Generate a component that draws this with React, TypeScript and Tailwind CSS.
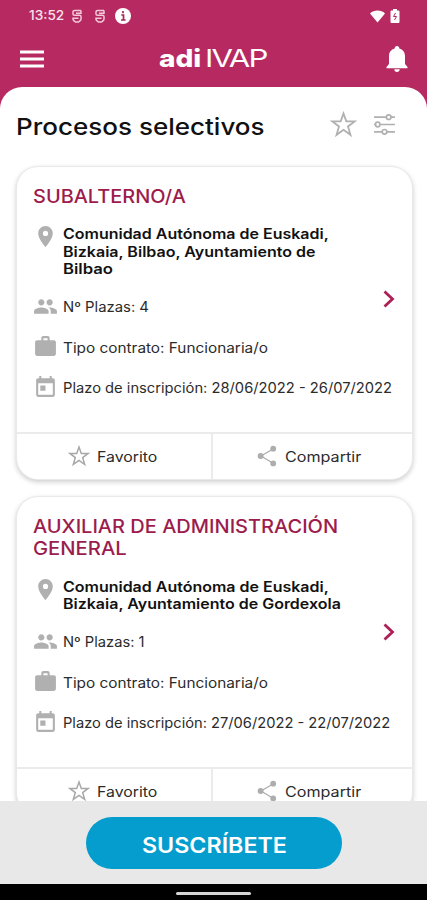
import { useLayoutEffect, useRef, useState } from "react";
import { MdPeople, MdPlace, MdToday, MdWork } from "react-icons/md";

/** Single line of text stretched horizontally to a given width. */
function Fit({ w, children }: { w: number; children: string }) {
  const ref = useRef<HTMLSpanElement>(null);
  const [scale, setScale] = useState(1);
  useLayoutEffect(() => {
    if (ref.current) setScale(w / ref.current.offsetWidth);
  }, [w]);
  return (
    <span className="block whitespace-nowrap" style={{ width: w }}>
      <span ref={ref} className="inline-block origin-left align-top" style={{ transform: `scaleX(${scale})` }}>
        {children}
      </span>
    </span>
  );
}

function Star({ className }: { className: string }) {
  return (
    <svg viewBox="0 0 24 24" className={className} fill="none" stroke="currentColor" strokeWidth="1.6">
      <path d="M12 2.2 14.5 9.2H22L16 13.7 18.2 21.2 12 16.7 5.8 21.2 8 13.7 2 9.2H9.5Z" />
    </svg>
  );
}

function Share() {
  return (
    <svg viewBox="0 0 20 22" className="h-[22px] w-5 text-[#adadad]" fill="currentColor">
      <path d="M16.5 3.7 4 11l12.5 7.5" fill="none" stroke="currentColor" strokeWidth="1.3" />
      <circle cx="16.2" cy="3.7" r="2.9" />
      <circle cx="3.6" cy="11" r="2.9" />
      <circle cx="16.2" cy="18.4" r="2.9" />
    </svg>
  );
}

function Sliders() {
  return (
    <svg viewBox="0 0 22 22" className="h-[23px] w-[23px] text-[#b0b0b0]" fill="none" stroke="currentColor" strokeWidth="1.6">
      <path d="M1 4h12M17 4h4M1 11h2M7 11h14M1 18h8M13 18h8" />
      <circle cx="15" cy="4" r="2.2" />
      <circle cx="4.5" cy="11" r="2.2" />
      <circle cx="11" cy="18" r="2.2" />
    </svg>
  );
}

function StatusLoop() {
  return (
    <svg viewBox="0 0 12 14" className="h-3.5 w-3" fill="none" stroke="#f3c9da" strokeWidth="1.5">
      <path d="M10 1.5H3.5Q2 1.500 2 3v2q0 1.300 1.500 1.300h5Q10 6.300 10 7.600V10q0 1-.8 1.600L7.500 13h-3L2.800 11.600Q2 11 2 10V9.300h5.500M10 1.500v2.800H5" />
    </svg>
  );
}

type Line = [text: string, width: number];
type Job = { title: Line[]; place: Line[]; posts: Line; type: Line; term: Line };

const jobs: Job[] = [
  {
    title: [["SUBALTERNO/A", 153]],
    place: [
      ["Comunidad Autónoma de Euskadi,", 266],
      ["Bizkaia, Bilbao, Ayuntamiento de", 253],
      ["Bilbao", 50],
    ],
    posts: ["Nº Plazas: 4", 86],
    type: ["Tipo contrato: Funcionaria/o", 205],
    term: ["Plazo de inscripción: 28/06/2022 - 26/07/2022", 329],
  },
  {
    title: [
      ["AUXILIAR DE ADMINISTRACIÓN", 305],
      ["GENERAL", 94],
    ],
    place: [
      ["Comunidad Autónoma de Euskadi,", 266],
      ["Bizkaia, Ayuntamiento de Gordexola", 277.5],
    ],
    posts: ["Nº Plazas: 1", 82],
    type: ["Tipo contrato: Funcionaria/o", 205],
    term: ["Plazo de inscripción: 27/06/2022 - 22/07/2022", 327],
  },
];

function Card({ job }: { job: Job }) {
  const rows = [
    { Icon: MdPeople, line: job.posts },
    { Icon: MdWork, line: job.type },
    { Icon: MdToday, line: job.term },
  ];
  return (
    <article className="w-[395px] shrink-0 overflow-hidden rounded-[21px] bg-white shadow-[0_0_0_1px_#e9e9e9,0_2px_5px_1px_rgba(0,0,0,0.2)]">
      <div className="relative pt-[18px] pl-4">
        <h2 className="text-[18.5px] leading-[22.5px] font-medium text-[#9c1c4d]">
          {job.title.map(([t, w]) => (
            <Fit key={t} w={w}>{t}</Fit>
          ))}
        </h2>
        <div className="mt-[18px] flex">
          <MdPlace className="-mt-px h-[25px] w-[25px] shrink-0 text-[#b0b0b0]" />
          <div className="ml-[5px] text-[14px] leading-[17.5px] font-semibold text-[#111]">
            {job.place.map(([t, w]) => (
              <Fit key={t} w={w}>{t}</Fit>
            ))}
          </div>
        </div>
        <div className="mt-[20.5px] flex flex-col gap-[23px] pb-[35px]">
          {rows.map(({ Icon, line: [t, w] }) => (
            <div key={t} className="flex h-[17.5px] items-center text-[14px] leading-[17.5px] text-[#2b2b2b]">
              <Icon className="-mt-px h-[25px] w-[25px] shrink-0 text-[#b0b0b0]" />
              <div className="ml-[5px]">
                <Fit w={w}>{t}</Fit>
              </div>
            </div>
          ))}
        </div>
        <svg viewBox="0 0 12 18" className="absolute top-1/2 right-[17px] -mt-[9px] h-[18px] w-3" fill="none" stroke="#ad1f55" strokeWidth="2.8">
          <path d="M1.5 1.5 9.5 9l-8 7.5" />
        </svg>
      </div>
      <div className="flex h-[47px] border-t-2 border-[#ebebeb] text-[14px] text-[#2b2b2b]">
        <button className="flex w-[195.5px] items-center border-r-2 border-[#ebebeb] pl-[51px]">
          <Star className="h-[22px] w-[22px] text-[#a8a8a8]" />
          <span className="ml-1"><Fit w={60}>Favorito</Fit></span>
        </button>
        <button className="flex flex-1 items-center pl-11">
          <Share />
          <span className="ml-[3.5px]"><Fit w={76}>Compartir</Fit></span>
        </button>
      </div>
    </article>
  );
}

export default function App() {
  return (
    <div className="flex h-[900px] w-[427px] flex-col overflow-hidden bg-[#b62a61] font-['Inter','Liberation_Sans',sans-serif]">
      <div className="flex h-8 shrink-0 items-center pl-[29px] text-[12.5px] font-medium text-[#f9e4ec]">
        <Fit w={35}>13:52</Fit>
        <span className="ml-[7px]"><StatusLoop /></span>
        <span className="ml-[11px]"><StatusLoop /></span>
        <svg viewBox="0 0 16 16" className="ml-[9px] h-4 w-4">
          <circle cx="8" cy="8" r="8" fill="#fff" />
          <path d="M6.3 7H8.5v5M6 12h4.6M8 3v2.2" fill="none" stroke="#a6265a" strokeWidth="1.7" />
        </svg>
        <svg viewBox="0 0 16 13" className="ml-auto h-[13px] w-[15px]">
          <path d="M0 3.2C4.5-.8 11.5-.8 16 3.2L8 13Z" fill="#fff" />
        </svg>
        <svg viewBox="0 0 10 14" className="mr-[27px] ml-[5px] h-3.5 w-2.5">
          <path d="M1.5 1.5H3V0h4v1.500h1.500a1 1 0 0 1 1 1V13a1 1 0 0 1-1 1h-7a1 1 0 0 1-1-1V2.500a1 1 0 0 1 1-1Z" fill="#fff" />
          <path d="M5.5 4 3.500 7.500h3L4.500 11" fill="none" stroke="#b62a61" />
        </svg>
      </div>
      <header className="flex h-[55px] shrink-0 items-center pr-[19px] pl-5 text-white">
        <svg viewBox="0 0 24 18" className="-mt-0.5 h-[18px] w-6" stroke="#fff" strokeWidth="2.8">
          <path d="M0 2h24M0 9h24M0 16h24" />
        </svg>
        <div className="-mt-0.5 ml-[115px] flex text-[24px] leading-7">
          <div className="font-extrabold"><Fit w={42}>adi</Fit></div>
          <div className="ml-1 font-normal tracking-[-1.5px]"><Fit w={61}>IVAP</Fit></div>
        </div>
        <svg viewBox="0 0 22 26" className="-mt-0.5 ml-auto h-[26px] w-[22px]" fill="#fff">
          <path d="M11 0c1.500 0 2.300 1 2.300 2.500C17 3.500 19 6.500 19 10v8l2.500 3v1.200H.5V21L3 18v-8c0-3.500 2-6.500 5.700-7.500C8.700 1 9.500 0 11 0ZM8.300 23.300h5.400C13.700 25 12.500 26 11 26s-2.700-1-2.700-2.700Z" />
        </svg>
      </header>
      <main className="flex min-h-0 flex-1 flex-col overflow-hidden rounded-t-[22px] bg-white">
        <div className="flex h-[77px] shrink-0 items-center pr-[31px] pl-[15.5px]">
          <h1 className="pt-0.5 text-[23.5px] font-medium text-[#111]"><Fit w={249}>Procesos selectivos</Fit></h1>
          <div className="-mt-[3px] ml-auto flex items-center gap-4">
            <Star className="h-[27px] w-[27px] text-[#b0b0b0]" />
            <Sliders />
          </div>
        </div>
        <div className="flex min-h-0 flex-1 flex-col gap-[18px] overflow-hidden px-[17px] pt-[2.5px]">
          {jobs.map((job) => (
            <Card key={job.title[0][0]} job={job} />
          ))}
        </div>
      </main>
      <footer className="flex h-[83px] shrink-0 justify-center bg-[#e8e8e8] pt-4">
        <button className="flex h-[52px] w-64 items-center justify-center rounded-full bg-[#059dce] pt-[5px] pr-1 text-[21px] font-semibold text-white">
          <span className="-ml-2"><Fit w={145}>SUSCRÍBETE</Fit></span>
        </button>
      </footer>
      <div className="flex h-4 shrink-0 items-center justify-center bg-black pt-0.5">
        <div className="h-[3px] w-[75px] rounded-full bg-[#d5d5d5]" />
      </div>
    </div>
  );
}
